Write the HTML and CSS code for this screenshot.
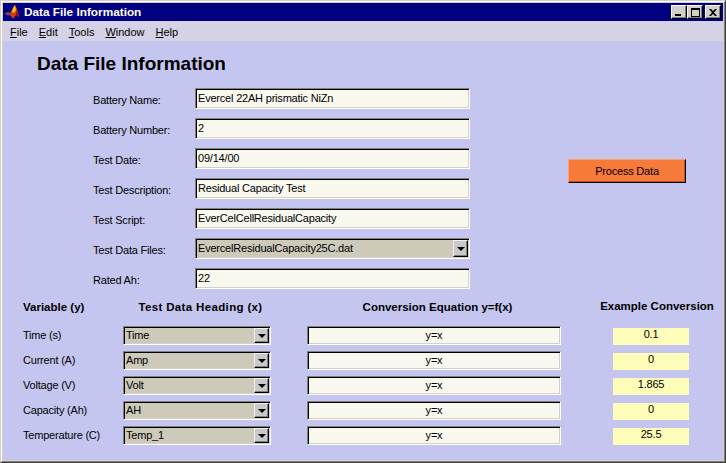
FILE: index.html
```html
<!DOCTYPE html>
<html>
<head>
<meta charset="utf-8">
<title>Data File Information</title>
<link rel="stylesheet" href="styles.css">
</head>
<body>
<div class="window">
  <div class="frame">
    <div class="titlebar">
      <svg class="appicon" width="16" height="16" viewBox="0 0 16 16">
        <path d="M0 10 L4 8 L6 9 L9 4 L11 1 L13 5 L15 13 L12 11 L9 15 L6 11 Z" fill="#d83a10"/>
        <path d="M9 4 L11 1 L12 6 L10 9 L8 8 Z" fill="#ffc020"/>
        <path d="M2 10 L5 9 L6 11 L4 12 Z" fill="#3050c0"/>
        <path d="M12 6 L15 13 L12 11 Z" fill="#901800"/>
      </svg>
      <span class="title">Data File Information</span>
      <div class="tbuttons">
        <div class="tbtn"><svg width="8" height="7" viewBox="0 0 8 7"><rect x="0" y="5" width="6" height="2" fill="#000"/></svg></div>
        <div class="tbtn"><svg width="9" height="9" viewBox="0 0 9 9"><path d="M0 0H9V9H0Z M1 2V8H8V2Z" fill="#000" fill-rule="evenodd"/></svg></div>
        <div class="tbtn close"><svg width="8" height="7" viewBox="0 0 8 7"><path d="M0 0H2L4 2L6 0H8L5 3.5L8 7H6L4 5L2 7H0L3 3.5Z" fill="#000"/></svg></div>
      </div>
    </div>
    <div class="menubar">
      <span><u>F</u>ile</span>
      <span><u>E</u>dit</span>
      <span><u>T</u>ools</span>
      <span><u>W</u>indow</span>
      <span><u>H</u>elp</span>
    </div>
    <div class="client">
      <h1 class="heading">Data File Information</h1>
      <div class="form">
        <div class="process">Process Data</div>

        <div class="label">Battery Name:</div>
        <div class="field">Evercel 22AH prismatic NiZn</div>

        <div class="label">Battery Number:</div>
        <div class="field">2</div>

        <div class="label">Test Date:</div>
        <div class="field">09/14/00</div>

        <div class="label">Test Description:</div>
        <div class="field">Residual Capacity Test</div>

        <div class="label">Test Script:</div>
        <div class="field">EverCelCellResidualCapacity</div>

        <div class="label">Test Data Files:</div>
        <div class="select wide"><span>EvercelResidualCapacity25C.dat</span><div class="arrow"><i></i></div></div>

        <div class="label">Rated Ah:</div>
        <div class="field">22</div>
      </div>

      <div class="table">
        <div class="hdr hvar">Variable (y)</div>
        <div class="hdr hsel"><span>Test Data Heading (x)</span></div>
        <div class="hdr heq"><span>Conversion Equation y=f(x)</span></div>
        <div class="hdr hex"><span>Example Conversion</span></div>

        <div class="rlabel">Time (s)</div>
        <div class="select"><span>Time</span><div class="arrow"><i></i></div></div>
        <div class="eq">y=x</div>
        <div class="ex">0.1</div>

        <div class="rlabel">Current (A)</div>
        <div class="select"><span>Amp</span><div class="arrow"><i></i></div></div>
        <div class="eq">y=x</div>
        <div class="ex">0</div>

        <div class="rlabel">Voltage (V)</div>
        <div class="select"><span>Volt</span><div class="arrow"><i></i></div></div>
        <div class="eq">y=x</div>
        <div class="ex">1.865</div>

        <div class="rlabel">Capacity (Ah)</div>
        <div class="select"><span>AH</span><div class="arrow"><i></i></div></div>
        <div class="eq">y=x</div>
        <div class="ex">0</div>

        <div class="rlabel">Temperature (C)</div>
        <div class="select"><span>Temp_1</span><div class="arrow"><i></i></div></div>
        <div class="eq">y=x</div>
        <div class="ex">25.5</div>
      </div>
    </div>
  </div>
</div>
</body>
</html>
```

FILE: styles.css
```css
html, body {
  margin: 0;
  padding: 0;
  background: #c5c6f0;
}

body {
  font-family: "Liberation Sans", Arial, sans-serif;
  font-size: 11px;
  letter-spacing: -0.2px;
  color: #000;
}

.window {
  width: 726px;
  height: 463px;
  box-sizing: border-box;
  border: 1px solid;
  border-color: #d4d0c8 #404040 #404040 #d4d0c8;
  background: #d4d0c8;
}

.frame {
  height: 100%;
  box-sizing: border-box;
  border: 1px solid;
  border-color: #ffffff #808080 #808080 #ffffff;
  padding: 1px;
  display: flex;
  flex-direction: column;
}

.titlebar {
  height: 18px;
  background: #000080;
  display: flex;
  align-items: center;
  padding-left: 1px;
  flex: none;
}

.appicon {
  flex: none;
  margin-right: 4px;
}

.title {
  color: #fff;
  font-weight: bold;
  font-size: 11.8px;
  letter-spacing: 0;
  flex: 1;
}

.tbuttons {
  display: flex;
  align-items: center;
  margin-right: 2px;
}

.tbtn {
  width: 16px;
  height: 14px;
  box-sizing: border-box;
  background: #d4d0c8;
  border: 1px solid;
  border-color: #fff #000 #000 #fff;
  box-shadow: inset -1px -1px #808080;
  display: flex;
  align-items: center;
  justify-content: center;
}

.tbtn.close {
  margin-left: 2px;
}

.menubar {
  height: 20px;
  box-sizing: border-box;
  padding: 2px 0 0 7px;
  line-height: 18px;
  background: #d4d2e4;
  display: flex;
  gap: 11px;
  flex: none;
  letter-spacing: 0;
}

.client {
  flex: 1;
  background: #c5c6f0;
  padding-top: 12px;
}

.heading {
  margin: 0 0 0 34px;
  font-size: 19px;
  line-height: 22px;
  font-weight: bold;
  letter-spacing: 0;
}

.form {
  margin: 13px 0 0 90px;
  display: grid;
  grid-template-columns: 102px 275px 216px;
  grid-auto-rows: 21px;
  row-gap: 9px;
}

.label {
  grid-column: 1;
  padding-top: 6px;
  line-height: 13px;
  white-space: nowrap;
}

.form .field,
.form .select {
  grid-column: 2;
}

.field,
.eq {
  box-sizing: border-box;
  border: 1px solid;
  border-color: #808080 #ffffff #ffffff #808080;
  box-shadow: inset 1px 1px #000, inset -1px -1px #d4d0c8;
  background: #f8f8ef;
  line-height: 13px;
  padding: 3px 2px 0 2px;
  white-space: nowrap;
  overflow: hidden;
}

.process {
  grid-column: 3;
  grid-row: 3 / span 2;
  align-self: start;
  justify-self: start;
  margin: 11px 0 0 98px;
  width: 118px;
  height: 24px;
  box-sizing: border-box;
  background: #f87a3a;
  border: 1px solid;
  border-color: #fca070 #000 #000 #fca070;
  box-shadow: inset -1px -1px #c05020;
  text-align: center;
  line-height: 22px;
}

.select {
  box-sizing: border-box;
  border: 1px solid;
  border-color: #808080 #ffffff #ffffff #808080;
  box-shadow: inset 1px 1px #000, inset -1px -1px #d4d0c8;
  background: #cdcab9;
  display: flex;
  align-items: stretch;
  justify-content: space-between;
  padding: 1px 1px 1px 2px;
  line-height: 13px;
  white-space: nowrap;
}

.select span {
  padding-top: 1px;
}

.select.wide span {
  padding-top: 2px;
}

.arrow {
  width: 15px;
  box-sizing: border-box;
  background: #c9c9cc;
  border: 1px solid;
  border-color: #f0f0f0 #000 #000 #f0f0f0;
  box-shadow: inset -1px -1px #808080;
  display: flex;
  align-items: center;
  justify-content: center;
  flex: none;
}

.arrow i {
  width: 0;
  height: 0;
  border-left: 4px solid transparent;
  border-right: 4px solid transparent;
  border-top: 4px solid #000;
  margin-top: 1px;
}

.table {
  margin: 11px 0 0 20px;
  display: grid;
  grid-template-columns: 100px 184px 306px 76px;
  grid-template-rows: 20px;
  grid-auto-rows: 19px;
  row-gap: 6px;
}

.hdr {
  font-weight: bold;
  font-size: 11.5px;
  line-height: 14px;
  letter-spacing: 0;
  white-space: nowrap;
  display: flex;
  justify-content: center;
  height: 14px;
}

.hvar {
  justify-content: flex-start;
}

.hsel {
  width: 148px;
  padding-left: 7px;
  box-sizing: border-box;
  letter-spacing: 0.35px;
}

.heq {
  width: 254px;
  padding-left: 7px;
  box-sizing: border-box;
}

.hex {
  width: 76px;
  padding-left: 12px;
  box-sizing: border-box;
  margin-top: -1px;
}

.rlabel {
  padding-top: 3px;
  line-height: 13px;
  white-space: nowrap;
}

.table .select {
  width: 148px;
  height: 19px;
}

.eq {
  width: 254px;
  height: 19px;
  text-align: center;
  padding-top: 2px;
}

.ex {
  width: 76px;
  height: 17px;
  margin-top: 2px;
  background: #fdfcb8;
  text-align: center;
  line-height: 13px;
  padding-top: 0;
  box-sizing: border-box;
}
```
